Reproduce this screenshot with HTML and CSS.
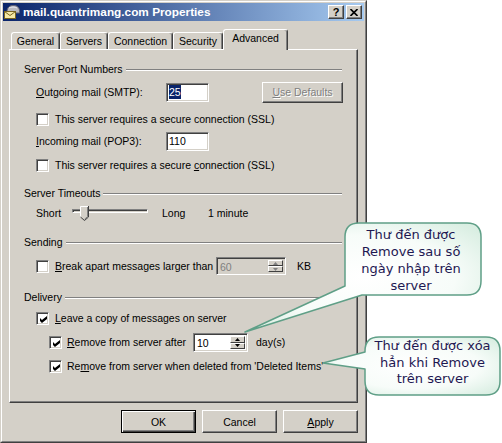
FILE: index.html
```html
<!DOCTYPE html>
<html>
<head>
<meta charset="utf-8">
<title>mail.quantrimang.com Properties</title>
<link rel="stylesheet" href="styles.css">
</head>
<body>
<div class="dialog">
  <div class="frame">
    <div class="titlebar">
      <svg class="appicon" viewBox="0 0 16 16" width="16" height="16">
        <path d="M3 8 C3 3 6 1.5 9.5 1.5 C13 1.5 15.5 3.5 15.5 7 L15.5 9 L3 9 Z" fill="#b8b8c0" stroke="#606070" stroke-width="1"/>
        <path d="M5 4 C7 2.8 11 2.8 13 4" fill="none" stroke="#e8e8f0" stroke-width="1"/>
        <rect x="0.5" y="7.5" width="11" height="7" fill="#f6e9a6" stroke="#7a6420"/>
        <path d="M0.5 7.5 L6 11.5 L11.5 7.5" fill="none" stroke="#7a6420"/>
      </svg>
      <span class="title">mail.quantrimang.com Properties</span>
      <div class="tbtns">
        <span class="tbtn">?</span>
        <span class="tbtn">
          <svg viewBox="0 0 8 7" width="8" height="7"><path d="M0.5 0 L7.5 7 M7.5 0 L0.5 7" stroke="#000" stroke-width="1.6"/></svg>
        </span>
      </div>
    </div>

    <div class="content">
      <div class="tabs">
        <div class="tab w-general">General</div>
        <div class="tab w-servers">Servers</div>
        <div class="tab w-connection">Connection</div>
        <div class="tab w-security">Security</div>
        <div class="tab active">Advanced</div>
      </div>

      <div class="panel">
        <div class="group g-first"><span>Server Port Numbers</span><i class="rule"></i></div>
        <div class="row r-out">
          <span class="lbl"><u>O</u>utgoing mail (SMTP):</span>
          <span class="field"><span class="sel">25</span></span>
          <span class="btn disabled btn-defaults"><u>U</u>se Defaults</span>
        </div>
        <div class="check r-ssl1"><span class="box"></span><span>This server requires a secure connection (SSL)</span></div>
        <div class="row r-in">
          <span class="lbl"><u>I</u>ncoming mail (POP3):</span>
          <span class="field">110</span>
        </div>
        <div class="check r-ssl2"><span class="box"></span><span>This server requires a secure <u>c</u>onnection (SSL)</span></div>

        <div class="group"><span>Server Timeouts</span><i class="rule"></i></div>
        <div class="row r-time">
          <span class="t-short">Short</span>
          <span class="slider">
            <i class="track"></i>
            <svg class="thumb" viewBox="0 0 9 15" width="9" height="15">
              <path d="M0 0 H9 V11 L4.5 15 L0 11 Z" fill="#d4d0c8"/>
              <path d="M0.5 11 V0.5 H8" fill="none" stroke="#fff"/>
              <path d="M8.5 0 V11 L4.5 14.5 L0.5 11" fill="none" stroke="#404040"/>
              <path d="M7.5 1 V10.6 L4.5 13.3" fill="none" stroke="#808080"/>
            </svg>
          </span>
          <span class="t-long">Long</span>
          <span>1 minute</span>
        </div>

        <div class="group g-send"><span>Sending</span><i class="rule"></i></div>
        <div class="check r-break">
          <span class="box"></span>
          <span class="break-lbl"><u>B</u>reak apart messages larger than</span>
          <span class="spin spin-off">
            <span class="val">60</span>
            <span class="arrows">
              <span class="arr"><svg viewBox="0 0 5 3" width="5" height="3"><path d="M2.5 0 L5 3 H0 Z" fill="#808080"/></svg></span>
              <span class="arr"><svg viewBox="0 0 5 3" width="5" height="3"><path d="M0 0 H5 L2.5 3 Z" fill="#808080"/></svg></span>
            </span>
          </span>
          <span class="unit-kb">KB</span>
        </div>

        <div class="group g-deliv"><span>Delivery</span><i class="rule"></i></div>
        <div class="check r-leave"><span class="box on"></span><span><u>L</u>eave a copy of messages on server</span></div>
        <div class="check sub r-after">
          <span class="box on"></span>
          <span class="after-lbl"><u>R</u>emove from server after</span>
          <span class="spin spin-on">
            <span class="val">10</span>
            <span class="arrows">
              <span class="arr"><svg viewBox="0 0 5 3" width="5" height="3"><path d="M2.5 0 L5 3 H0 Z" fill="#000"/></svg></span>
              <span class="arr"><svg viewBox="0 0 5 3" width="5" height="3"><path d="M0 0 H5 L2.5 3 Z" fill="#000"/></svg></span>
            </span>
          </span>
          <span class="unit-day">day(s)</span>
        </div>
        <div class="check sub r-del"><span class="box on"></span><span>Re<u>m</u>ove from server when deleted from 'Deleted Items'</span></div>
      </div>

      <div class="actions">
        <span class="btn default">OK</span>
        <span class="btn">Cancel</span>
        <span class="btn"><u>A</u>pply</span>
      </div>
    </div>
  </div>
</div>

<svg class="overlay" viewBox="0 0 502 443" width="502" height="443">
  <defs>
    <radialGradient id="mint" cx="50%" cy="50%" r="65%">
      <stop offset="0" stop-color="#ffffff"/>
      <stop offset="0.6" stop-color="#f7fcf9"/>
      <stop offset="1" stop-color="#d9eee2"/>
    </radialGradient>
  </defs>
  <path d="M359 223 H467 Q481 223 481 237 V281 Q481 295 467 295 H362 L245 332 L345 286 V237 Q345 223 359 223 Z"
        fill="url(#mint)" stroke="#5f9f87" stroke-width="1.5" stroke-linejoin="round"/>
  <path d="M379 337 H486 Q500 337 500 351 V381 Q500 395 486 395 H379 Q365 395 365 381 V369 L323 363 L365 352 V351 Q365 337 379 337 Z"
        fill="url(#mint)" stroke="#5f9f87" stroke-width="1.5" stroke-linejoin="round"/>
</svg>
<div class="note note1">Thư đến được<br>Remove sau số<br>ngày nhập trên<br>server</div>
<div class="note note2">Thư đến được xóa<br>hẳn khi Remove<br>trên server</div>
</body>
</html>
```

FILE: styles.css
```css
body {
  margin: 0;
  background: #fff;
  font-family: "Liberation Sans", Arial, sans-serif;
  font-size: 10.5px;
  color: #000;
  position: relative;
  width: 502px;
  height: 443px;
  overflow: hidden;
}

u { text-decoration: underline; text-underline-offset: 1px; }

.dialog {
  width: 367px;
  height: 443px;
  box-sizing: border-box;
  border: 1px solid;
  border-color: #d4d0c8 #404040 #404040 #d4d0c8;
  background: #d4d0c8;
}
.frame {
  height: 100%;
  box-sizing: border-box;
  border: 1px solid;
  border-color: #fff #808080 #808080 #fff;
  padding: 1px;
  display: flex;
  flex-direction: column;
}

/* title bar */
.titlebar {
  height: 18px;
  flex: none;
  display: flex;
  align-items: center;
  padding: 0 2px 0 1px;
  background: linear-gradient(to right, #0a246a, #a6caf0);
}
.appicon { flex: none; }
.title {
  flex: 1;
  margin-left: 3px;
  color: #fff;
  font-weight: bold;
  font-size: 11.8px;
  white-space: nowrap;
}
.tbtns { display: flex; gap: 2px; }
.tbtn {
  width: 16px;
  height: 14px;
  box-sizing: border-box;
  background: #d4d0c8;
  border: 1px solid;
  border-color: #fff #404040 #404040 #fff;
  box-shadow: inset -1px -1px #808080;
  display: flex;
  align-items: center;
  justify-content: center;
  font-weight: bold;
  font-size: 11px;
  line-height: 12px;
}

/* content */
.content { padding: 0 6px; }

.tabs {
  display: flex;
  align-items: flex-end;
  height: 20px;
  margin-top: 8px;
  padding-left: 2px;
}
.tab {
  height: 17px;
  box-sizing: border-box;
  border: 1px solid;
  border-bottom: none;
  border-color: #fff #404040 transparent #fff;
  border-radius: 3px 3px 0 0;
  box-shadow: inset -1px 0 #808080;
  text-align: center;
  line-height: 16px;
  white-space: nowrap;
}
.w-general { width: 49px; }
.w-servers { width: 48px; }
.w-connection { width: 65px; }
.w-security { width: 50px; }
.tab.active {
  width: 65px;
  height: 21px;
  margin-bottom: -1px;
  position: relative;
  z-index: 1;
  background: #d4d0c8;
  line-height: 17px;
}

.panel {
  height: 354px;
  box-sizing: border-box;
  border: 1px solid;
  border-color: #fff #404040 #404040 #fff;
  box-shadow: inset -1px -1px #808080;
  padding: 0 15px 0 14px;
  display: flex;
  flex-direction: column;
}

.group {
  height: 13px;
  line-height: 13px;
  display: flex;
  align-items: center;
  white-space: nowrap;
  margin-top: 15px;
}
.g-first { margin-top: 13px; }
.g-deliv { margin-top: 16px; }
.rule {
  flex: 1;
  height: 0;
  margin-left: 3px;
  border-top: 1px solid #808080;
  border-bottom: 1px solid #fff;
}

.row, .check {
  display: flex;
  align-items: center;
  margin-left: 12px;
  white-space: nowrap;
  line-height: 13px;
}
.row > *, .check > * { flex-shrink: 0; }
.check { gap: 6px; }
.check.sub { margin-left: 25px; gap: 5px; }

.r-out { height: 21px; margin-top: 6px; }
.r-ssl1 { height: 13px; margin-top: 10px; }
.r-in { height: 19px; margin-top: 6px; }
.r-ssl2 { height: 13px; margin-top: 8px; }
.r-time { height: 16px; margin-top: 5px; }
.r-break { height: 18px; margin-top: 8px; }
.r-leave { height: 13px; margin-top: 8px; }
.r-after { height: 19px; margin-top: 8px; }
.r-del { height: 13px; margin-top: 8px; }

.lbl { width: 130px; }

.field {
  width: 43px;
  height: 19px;
  box-sizing: border-box;
  background: #fff;
  border: 1px solid;
  border-color: #808080 #fff #fff #808080;
  box-shadow: inset 1px 1px #404040, inset -1px -1px #d4d0c8;
  padding: 0 2px;
  line-height: 17px;
}
.r-out .field { height: 19px; }
.sel { background: #0a246a; color: #fff; padding: 1px 0; }

.btn {
  width: 75px;
  height: 23px;
  box-sizing: border-box;
  background: #d4d0c8;
  border: 1px solid;
  border-color: #fff #404040 #404040 #fff;
  box-shadow: inset -1px -1px #808080;
  display: flex;
  align-items: center;
  justify-content: center;
  white-space: nowrap;
}
.btn.disabled { color: #808080; text-shadow: 1px 1px #fff; }
.btn-defaults { width: 81px; height: 21px; margin-left: 53px; }
.btn.default {
  border-color: #000;
  box-shadow: inset 1px 1px #fff, inset -1px -1px #404040, inset -2px -2px #808080;
}

.box {
  width: 13px;
  height: 13px;
  box-sizing: border-box;
  background: #fff;
  border: 1px solid;
  border-color: #808080 #fff #fff #808080;
  box-shadow: inset 1px 1px #404040, inset -1px -1px #d4d0c8;
  position: relative;
}
.box.on::after {
  content: "";
  position: absolute;
  left: 3px;
  top: 3px;
  width: 7px;
  height: 7px;
  background: #000;
  clip-path: polygon(0% 28%, 28% 57%, 100% 0%, 100% 43%, 28% 100%, 0% 71%);
}

/* slider */
.t-short { width: 36px; }
.slider {
  width: 76px;
  height: 16px;
  position: relative;
  margin-right: 14px;
  display: flex;
  align-items: center;
}
.track {
  width: 100%;
  height: 4px;
  box-sizing: border-box;
  border: 1px solid;
  border-color: #808080 #fff #fff #808080;
  box-shadow: inset 1px 1px #404040;
  margin-top: -4px;
}
.thumb { position: absolute; left: 8px; top: 1px; }
.t-long { width: 46px; }

/* spin boxes */
.break-lbl { width: 155px; }
.after-lbl { width: 121px; }
.spin {
  height: 18px;
  box-sizing: border-box;
  border: 1px solid;
  border-color: #808080 #fff #fff #808080;
  box-shadow: inset 1px 1px #404040, inset -1px -1px #d4d0c8;
  padding: 2px 2px 2px 3px;
  display: flex;
  align-items: stretch;
}
.spin-off { width: 70px; background: #d4d0c8; color: #808080; }
.spin-on { width: 55px; height: 19px; background: #fff; }
.val { flex: 1; line-height: 14px; }
.arrows { width: 15px; display: flex; flex-direction: column; }
.arr {
  flex: 1;
  box-sizing: border-box;
  background: #d4d0c8;
  border: 1px solid;
  border-color: #fff #404040 #404040 #fff;
  display: flex;
  align-items: center;
  justify-content: center;
}
.unit-kb { margin-left: 5px; }
.unit-day { margin-left: 3px; }

.actions {
  display: flex;
  justify-content: flex-end;
  gap: 6px;
  margin-top: 7px;
}

/* callouts */
.overlay { position: absolute; left: 0; top: 0; pointer-events: none; }
.note {
  position: absolute;
  font-family: "DejaVu Sans", Verdana, sans-serif;
  font-size: 13px;
  color: #1e1852;
  text-align: center;
  white-space: nowrap;
}
.note1 { left: 343px; top: 226px; width: 136px; line-height: 17px; }
.note2 { left: 365px; top: 338px; width: 135px; line-height: 16.5px; }
```
